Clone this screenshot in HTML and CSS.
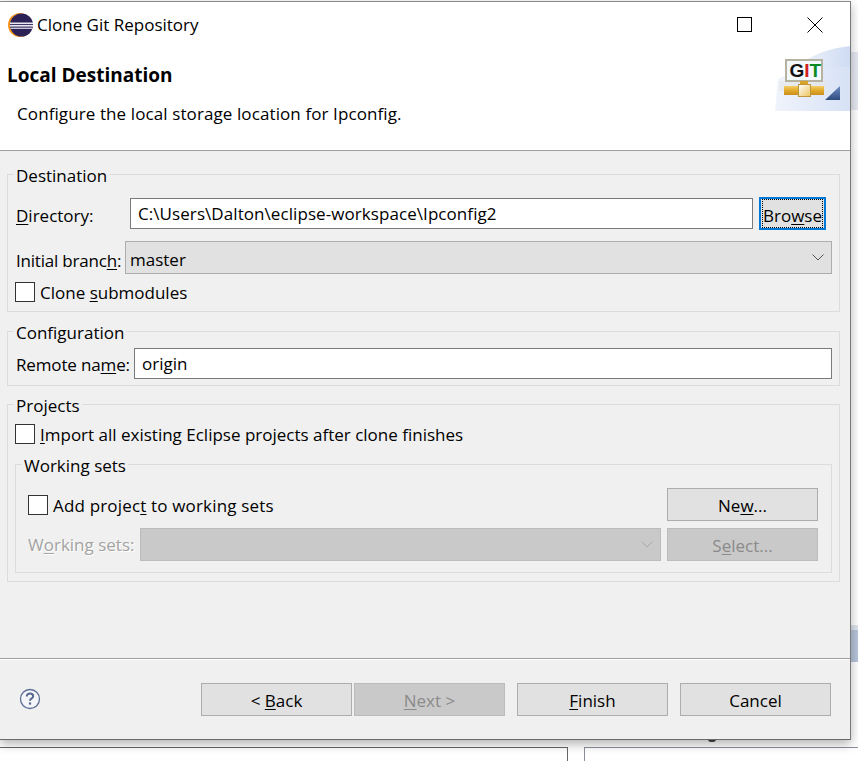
FILE: index.html
```html
<!DOCTYPE html>
<html lang="en">
<head>
    <meta charset="UTF-8">
    <title>Clone Git Repository</title>
    <link rel="stylesheet" href="styles.css">
</head>
<body>

    <div class="behind-strip strip-top"></div>
    <div class="behind-strip strip-mid"></div>
    <div class="behind-strip strip-low"></div>
    <div class="behind-box box-left"></div>
    <div class="behind-box box-right"></div>
    <div class="behind-tail"></div>

    <div class="window">
        <div class="titlebar">
            <svg class="app-icon" width="26" height="26" viewBox="0 0 26 26">
                <circle cx="12" cy="13" r="12" fill="#f7941e"/>
                <circle cx="13.5" cy="13" r="11.5" fill="#2c2255"/>
                <rect x="2" y="10.5" width="23" height="1.6" fill="#e8e6f0"/>
                <rect x="2" y="13" width="23" height="1.6" fill="#e8e6f0"/>
                <rect x="2.6" y="15.6" width="21.8" height="1.4" fill="#c9c5da"/>
            </svg>
            <span class="title-text">Clone Git Repository</span>
            <div class="win-buttons">
                <svg width="16" height="16" viewBox="0 0 16 16"><rect x="0.5" y="0.5" width="14" height="14" fill="none" stroke="#000"/></svg>
                <svg width="16" height="16" viewBox="0 0 16 16"><path d="M0.5 0.5L15.5 15.5M15.5 0.5L0.5 15.5" stroke="#000" fill="none"/></svg>
            </div>
        </div>

        <div class="header">
            <h1>Local Destination</h1>
            <p>Configure the local storage location for Ipconfig.</p>
            <svg class="git-banner" width="78" height="68" viewBox="0 0 78 68">
                <defs>
                    <linearGradient id="wash" x1="0" y1="0" x2="1" y2="0">
                        <stop offset="0" stop-color="#ffffff"/>
                        <stop offset="1" stop-color="#cfdcf3"/>
                    </linearGradient>
                    <linearGradient id="pipe" x1="0" y1="0" x2="0" y2="1">
                        <stop offset="0" stop-color="#f3cf68"/>
                        <stop offset="0.5" stop-color="#e2a92c"/>
                        <stop offset="1" stop-color="#c98e1c"/>
                    </linearGradient>
                    <linearGradient id="joint" x1="0" y1="0" x2="1" y2="1">
                        <stop offset="0" stop-color="#ffffff"/>
                        <stop offset="1" stop-color="#edc35c"/>
                    </linearGradient>
                    <linearGradient id="corner" x1="0" y1="0" x2="0" y2="1">
                        <stop offset="0" stop-color="#6f8fc4"/>
                        <stop offset="1" stop-color="#2f4c80"/>
                    </linearGradient>
                </defs>
                <path d="M3 66C8 30 32 6 78 1V66Z" fill="url(#wash)"/>
                <path d="M6 34C28 24 52 22 78 22V66H3Z" fill="#dfe7f7" opacity="0.5"/>
                <rect x="7" y="36" width="48" height="10" fill="#e6e6e6" opacity="0.6"/>
                <rect x="14" y="15" width="36" height="21" fill="#f3f8fd" stroke="#b5b2a0" stroke-width="2"/>
                <text class="git-text" x="17.5" y="32"><tspan fill="#111">G</tspan><tspan fill="#d02020">I</tspan><tspan fill="#0a8a20">T</tspan></text>
                <rect x="28" y="36" width="8" height="4" fill="#d9a32a"/>
                <rect x="12" y="41" width="40" height="9" fill="url(#pipe)"/>
                <rect x="26.5" y="39.5" width="12" height="12" fill="url(#joint)" stroke="#c0963a"/>
                <path d="M53 55L68 41V55Z" fill="url(#corner)"/>
            </svg>
        </div>

        <div class="content">
            <fieldset class="group group-destination">
                <legend>Destination</legend>
                <div class="row row-directory">
                    <label class="label label-directory"><u>D</u>irectory:</label>
                    <div class="field field-path">C:\Users\Dalton\eclipse-workspace\Ipconfig2</div>
                    <button class="btn btn-browse"><span class="focus-ring">Bro<u>w</u>se</span></button>
                </div>
                <div class="row row-branch">
                    <label class="label">Initial branc<u>h</u>:</label>
                    <div class="combo">
                        <span class="combo-text">master</span>
                        <svg width="12" height="7" viewBox="0 0 12 7"><path d="M0.5 0.5L6 6L11.5 0.5" fill="none" stroke="#555"/></svg>
                    </div>
                </div>
                <label class="check"><span class="box"></span><span class="check-text">Clone <u>s</u>ubmodules</span></label>
            </fieldset>

            <fieldset class="group group-configuration">
                <legend>Configuration</legend>
                <div class="row">
                    <label class="label">Remote na<u>m</u>e:</label>
                    <div class="field">origin</div>
                </div>
            </fieldset>

            <fieldset class="group group-projects">
                <legend>Projects</legend>
                <label class="check"><span class="box"></span><span class="check-text"><u>I</u>mport all existing Eclipse projects after clone finishes</span></label>
                <fieldset class="group group-sets">
                    <legend>Working sets</legend>
                    <div class="row row-add">
                        <label class="check"><span class="box"></span><span class="check-text text-add">Add projec<u>t</u> to working sets</span></label>
                        <button class="btn btn-side">Ne<u>w</u>...</button>
                    </div>
                    <div class="row row-sets">
                        <label class="label is-disabled">W<u>o</u>rking sets:</label>
                        <div class="combo combo-disabled">
                            <span></span>
                            <svg width="12" height="7" viewBox="0 0 12 7"><path d="M0.5 0.5L6 6L11.5 0.5" fill="none" stroke="#a8a8a8"/></svg>
                        </div>
                        <button class="btn btn-side btn-disabled">S<u>e</u>lect...</button>
                    </div>
                </fieldset>
            </fieldset>
        </div>

        <div class="footer">
            <svg class="help" width="22" height="22" viewBox="0 0 22 22">
                <circle cx="11" cy="11" r="9.5" fill="#f4f5f8" stroke="#5d6f95" stroke-width="1.3"/>
                <path d="M7.8 8.4C7.8 6.6 9.2 5.6 11 5.6C12.9 5.6 14.2 6.7 14.2 8.2C14.2 10.4 11 10.4 11 12.8" fill="none" stroke="#56678c" stroke-width="2"/>
                <rect x="9.9" y="14.4" width="2.2" height="2.2" fill="#56678c"/>
            </svg>
            <div class="footer-buttons">
                <button class="btn btn-nav btn-back">&lt; <u>B</u>ack</button>
                <button class="btn btn-nav btn-disabled btn-next"><u>N</u>ext &gt;</button>
                <button class="btn btn-nav btn-finish"><u>F</u>inish</button>
                <button class="btn btn-nav">Cancel</button>
            </div>
        </div>
    </div>

</body>
</html>
```

FILE: styles.css
```css
html, body {
    margin: 0;
    padding: 0;
}
body {
    position: relative;
    width: 858px;
    height: 761px;
    overflow: hidden;
    background-color: #fff;
    font-family: "Open Sans", "Liberation Sans", sans-serif;
    font-size: 17px;
    color: #000;
}
u {
    text-underline-offset: 2px;
}

/* things from the windows behind the dialog */
.behind-strip {
    position: absolute;
    left: 850px;
    width: 8px;
}
.strip-top {
    top: 52px;
    height: 58px;
    background-color: #e6e9f2;
}
.strip-mid {
    top: 625px;
    height: 5px;
    background-color: #dfe3ec;
}
.strip-low {
    top: 630px;
    height: 32px;
    background-color: #b6c4da;
}
.behind-box {
    position: absolute;
    top: 747px;
    height: 20px;
    border: 1px solid #8a8f9a;
    background-color: #fff;
}
.box-left {
    left: -2px;
    width: 568px;
    border-color: #666;
}
.box-right {
    left: 584px;
    width: 300px;
}
.behind-tail {
    position: absolute;
    left: 708px;
    top: 739px;
    width: 8px;
    height: 3px;
    border-radius: 0 0 4px 4px;
    background-color: #444;
}

.window {
    position: relative;
    box-sizing: border-box;
    display: flex;
    flex-direction: column;
    width: 851px;
    height: 739px;
    margin-top: 1px;
    border-top: 1px solid #8a8a8a;
    border-right: 1px solid #7a7a7a;
    border-bottom: 1px solid #6a6a6a;
    background-color: #f0f0f0;
    box-shadow: 0 4px 10px rgba(0, 0, 0, 0.3);
}

.titlebar {
    display: flex;
    align-items: center;
    height: 46px;
    padding-left: 8px;
    background-color: #fff;
}
.app-icon {
    margin-right: 3px;
}
.title-text {
    flex: 1;
    padding-bottom: 2px;
}
.win-buttons {
    display: flex;
    gap: 54px;
    padding-right: 27px;
}

.header {
    position: relative;
    height: 102px;
    border-bottom: 1px solid #a0a0a0;
    background-color: #fff;
}
.header h1 {
    margin: 0;
    padding: 15px 0 0 7px;
    font-size: 19px;
    line-height: 24px;
}
.header p {
    margin: 0;
    padding: 15px 0 0 17px;
    line-height: 24px;
    letter-spacing: 0.1px;
}
.git-banner {
    position: absolute;
    right: 0;
    top: -3px;
}
.git-text {
    font-family: "Liberation Sans", sans-serif;
    font-size: 19px;
    font-weight: bold;
}

.content {
    flex: 1;
    padding: 12px 0 0 7px;
    border-bottom: 1px solid #a0a0a0;
    box-shadow: 0 1px 0 #fff;
}

.group {
    box-sizing: border-box;
    min-width: 0;
    margin: 0;
    padding: 0 7px;
    border: 1px solid #dcdcdc;
}
.group legend {
    margin-left: -1px;
    padding: 4px 2px 0;
    line-height: 18px;
}
.group-destination {
    width: 833px;
    height: 149px;
    padding-top: 11px;
}
.group-configuration {
    width: 833px;
    height: 66px;
    margin-top: 8px;
    padding-top: 6px;
}
.group-projects {
    width: 833px;
    height: 189px;
    margin-top: 7px;
    padding-top: 6px;
}
.group-sets {
    width: 817px;
    height: 120px;
    margin-top: 7px;
    padding: 13px 13px 0 12px;
}
.group-sets legend {
    margin-left: -6px;
}

.row {
    display: flex;
    align-items: center;
}
.row-directory {
    height: 34px;
    margin-right: 6px;
}
.row-branch {
    margin-top: 11px;
}
.label {
    flex: none;
    margin-left: 1px;
    padding-top: 3px;
    white-space: nowrap;
}
.label-directory {
    width: 114px;
    padding-top: 5px;
}
.row-branch .label {
    width: 109px;
    padding-top: 5px;
    letter-spacing: -0.2px;
}
.group-configuration .label {
    width: 118px;
    padding-top: 2px;
    letter-spacing: -0.15px;
}
.is-disabled {
    width: 112px;
    margin-left: 0;
    padding-top: 0;
    color: #a3a3a3;
    text-shadow: 1px 1px 0 #fff;
}

.field {
    flex: 1;
    box-sizing: border-box;
    height: 31px;
    padding-left: 7px;
    border: 1px solid #7a7a7a;
    background-color: #fff;
    line-height: 29px;
}
.field-path {
    letter-spacing: 0.07px;
}
.combo {
    flex: 1;
    display: flex;
    align-items: center;
    justify-content: space-between;
    box-sizing: border-box;
    height: 33px;
    padding: 0 7px 0 4px;
    border: 1px solid #adadad;
    background-color: #e1e1e1;
}
.combo-text {
    padding-top: 4px;
}
.combo-disabled {
    border-color: #bcbcbc;
    background-color: #c9c9c9;
}

.check {
    display: flex;
    align-items: center;
    gap: 5px;
    white-space: nowrap;
}
.check-text {
    padding-top: 2px;
}
.text-add {
    letter-spacing: 0.17px;
}
.group-destination .check {
    margin-top: 5px;
}
.box {
    flex: none;
    box-sizing: border-box;
    width: 20px;
    height: 20px;
    border: 1px solid #333;
    background-color: #fff;
}

.btn {
    box-sizing: border-box;
    height: 33px;
    padding: 1px 0 0;
    border: 1px solid #adadad;
    border-radius: 0;
    background-color: #e1e1e1;
    color: #000;
    font: inherit;
}
.btn-disabled {
    border-color: #bcbcbc;
    background-color: #c9c9c9;
    color: #8b8b8b;
}
.btn-browse {
    flex: none;
    width: 67px;
    height: 33px;
    margin-left: 6px;
    padding: 0;
    border: 2px solid #0078d7;
}
.focus-ring {
    display: block;
    height: 27px;
    margin: 0 1px;
    border: 1px dotted #000;
    line-height: 31px;
}
.btn-side {
    flex: none;
    width: 151px;
    margin-left: 6px;
}
.row-add {
    justify-content: space-between;
    height: 33px;
}
.row-sets {
    margin-top: 7px;
}

.footer {
    display: flex;
    align-items: flex-start;
    justify-content: space-between;
    height: 79px;
    margin-top: 1px;
    padding: 23px 19px 0 19px;
    box-sizing: border-box;
}
.help {
    margin-top: 5px;
}
.footer-buttons {
    display: flex;
}
.btn-nav {
    width: 151px;
    margin-left: 12px;
}
.btn-back {
    margin-left: 0;
}
.btn-next {
    margin-left: 2px;
}
```
